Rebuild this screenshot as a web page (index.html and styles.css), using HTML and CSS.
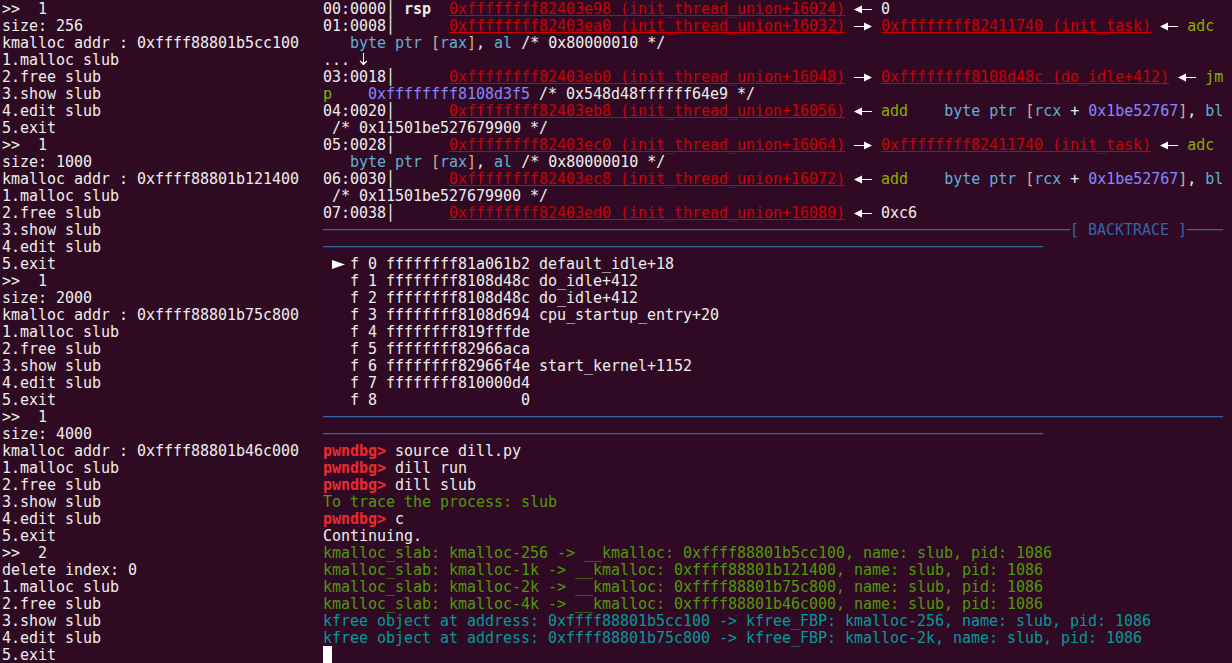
FILE: index.html
```html
<!DOCTYPE html>
<html lang="en">
<head>
<meta charset="utf-8">
<title>pwndbg</title>
<link rel="stylesheet" href="styles.css">
</head>
<body>
<svg class="defs" aria-hidden="true">
<symbol id="arrow-left" viewBox="0 0 18 17"><path d="M0 9.5 8 5.5V9H18V10H8V13.5Z"/></symbol>
<symbol id="arrow-right" viewBox="0 0 18 17"><path d="M18 9.5 10 5.5V9H0V10H10V13.5Z"/></symbol>
<symbol id="arrow-down" viewBox="0 0 9 17"><path d="M4 2H5V11.5L7.8 9.5 8.4 10.2 4.5 14.5 0.6 10.2 1.2 9.5 4 11.5Z"/></symbol>
<symbol id="frame-mark" viewBox="0 0 18 17"><path d="M0 5 13 9.5 0 14Z"/></symbol>
</svg>
<main class="terminal">
<section class="pane pane-left">
<div class="row">&gt;&gt;  1</div>
<div class="row">size: 256</div>
<div class="row">kmalloc addr : 0xffff88801b5cc100</div>
<div class="row">1.malloc slub</div>
<div class="row">2.free slub</div>
<div class="row">3.show slub</div>
<div class="row">4.edit slub</div>
<div class="row">5.exit</div>
<div class="row">&gt;&gt;  1</div>
<div class="row">size: 1000</div>
<div class="row">kmalloc addr : 0xffff88801b121400</div>
<div class="row">1.malloc slub</div>
<div class="row">2.free slub</div>
<div class="row">3.show slub</div>
<div class="row">4.edit slub</div>
<div class="row">5.exit</div>
<div class="row">&gt;&gt;  1</div>
<div class="row">size: 2000</div>
<div class="row">kmalloc addr : 0xffff88801b75c800</div>
<div class="row">1.malloc slub</div>
<div class="row">2.free slub</div>
<div class="row">3.show slub</div>
<div class="row">4.edit slub</div>
<div class="row">5.exit</div>
<div class="row">&gt;&gt;  1</div>
<div class="row">size: 4000</div>
<div class="row">kmalloc addr : 0xffff88801b46c000</div>
<div class="row">1.malloc slub</div>
<div class="row">2.free slub</div>
<div class="row">3.show slub</div>
<div class="row">4.edit slub</div>
<div class="row">5.exit</div>
<div class="row">&gt;&gt;  2</div>
<div class="row">delete index: 0</div>
<div class="row">1.malloc slub</div>
<div class="row">2.free slub</div>
<div class="row">3.show slub</div>
<div class="row">4.edit slub</div>
<div class="row">5.exit</div>
</section>
<section class="pane pane-right">
<div class="row">00:0000│ <b>rsp</b>  <span class="addr">0xffffffff82403e98 (init_thread_union+16024)</span> <svg class="glyph"><use href="#arrow-left"/></svg> 0</div>
<div class="row">01:0008│      <span class="addr">0xffffffff82403ea0 (init_thread_union+16032)</span> <svg class="glyph"><use href="#arrow-right"/></svg> <span class="addr">0xffffffff82411740 (init_task)</span> <svg class="glyph"><use href="#arrow-left"/></svg> <span class="op">adc</span></div>
<div class="row">   <span class="kw">byte ptr</span> <span class="br">[</span><span class="kw">rax</span><span class="br">]</span>, <span class="kw">al</span> /* 0x80000010 */</div>
<div class="row">... <svg class="glyph-narrow"><use href="#arrow-down"/></svg></div>
<div class="row">03:0018│      <span class="addr">0xffffffff82403eb0 (init_thread_union+16048)</span> <svg class="glyph"><use href="#arrow-right"/></svg> <span class="addr">0xffffffff8108d48c (do_idle+412)</span> <svg class="glyph"><use href="#arrow-left"/></svg> <span class="op">jm</span></div>
<div class="row"><span class="op">p</span>    <span class="num">0xffffffff8108d3f5</span> /* 0x548d48ffffff64e9 */</div>
<div class="row">04:0020│      <span class="addr">0xffffffff82403eb8 (init_thread_union+16056)</span> <svg class="glyph"><use href="#arrow-left"/></svg> <span class="op">add</span>    <span class="kw">byte ptr</span> <span class="br">[</span><span class="kw">rcx</span> + <span class="num">0x1be52767</span><span class="br">]</span>, <span class="kw">bl</span></div>
<div class="row"> /* 0x11501be527679900 */</div>
<div class="row">05:0028│      <span class="addr">0xffffffff82403ec0 (init_thread_union+16064)</span> <svg class="glyph"><use href="#arrow-right"/></svg> <span class="addr">0xffffffff82411740 (init_task)</span> <svg class="glyph"><use href="#arrow-left"/></svg> <span class="op">adc</span></div>
<div class="row">   <span class="kw">byte ptr</span> <span class="br">[</span><span class="kw">rax</span><span class="br">]</span>, <span class="kw">al</span> /* 0x80000010 */</div>
<div class="row">06:0030│      <span class="addr">0xffffffff82403ec8 (init_thread_union+16072)</span> <svg class="glyph"><use href="#arrow-left"/></svg> <span class="op">add</span>    <span class="kw">byte ptr</span> <span class="br">[</span><span class="kw">rcx</span> + <span class="num">0x1be52767</span><span class="br">]</span>, <span class="kw">bl</span></div>
<div class="row"> /* 0x11501be527679900 */</div>
<div class="row">07:0038│      <span class="addr">0xffffffff82403ed0 (init_thread_union+16080)</span> <svg class="glyph"><use href="#arrow-left"/></svg> 0xc6</div>
<div class="row rule">───────────────────────────────────────────────────────────────────────────────────<span class="title">[ BACKTRACE ]</span>────</div>
<div class="row rule">────────────────────────────────────────────────────────────────────────────────</div>
<div class="row"> <svg class="glyph"><use href="#frame-mark"/></svg>f 0 ffffffff81a061b2 default_idle+18</div>
<div class="row">   f 1 ffffffff8108d48c do_idle+412</div>
<div class="row">   f 2 ffffffff8108d48c do_idle+412</div>
<div class="row">   f 3 ffffffff8108d694 cpu_startup_entry+20</div>
<div class="row">   f 4 ffffffff819fffde</div>
<div class="row">   f 5 ffffffff82966aca</div>
<div class="row">   f 6 ffffffff82966f4e start_kernel+1152</div>
<div class="row">   f 7 ffffffff810000d4</div>
<div class="row">   f 8                0</div>
<div class="row rule">────────────────────────────────────────────────────────────────────────────────────────────────────</div>
<div class="row rule">────────────────────────────────────────────────────────────────────────────────</div>
<div class="row"><b class="prompt">pwndbg&gt;</b> source dill.py</div>
<div class="row"><b class="prompt">pwndbg&gt;</b> dill run</div>
<div class="row"><b class="prompt">pwndbg&gt;</b> dill slub</div>
<div class="row green">To trace the process: slub</div>
<div class="row"><b class="prompt">pwndbg&gt;</b> c</div>
<div class="row">Continuing.</div>
<div class="row green">kmalloc_slab: kmalloc-256 -&gt; __kmalloc: 0xffff88801b5cc100, name: slub, pid: 1086</div>
<div class="row green">kmalloc_slab: kmalloc-1k -&gt; __kmalloc: 0xffff88801b121400, name: slub, pid: 1086</div>
<div class="row green">kmalloc_slab: kmalloc-2k -&gt; __kmalloc: 0xffff88801b75c800, name: slub, pid: 1086</div>
<div class="row green">kmalloc_slab: kmalloc-4k -&gt; __kmalloc: 0xffff88801b46c000, name: slub, pid: 1086</div>
<div class="row teal">kfree object at address: 0xffff88801b5cc100 -&gt; kfree_FBP: kmalloc-256, name: slub, pid: 1086</div>
<div class="row teal">kfree object at address: 0xffff88801b75c800 -&gt; kfree_FBP: kmalloc-2k, name: slub, pid: 1086</div>
<div class="row"><span class="cursor"></span></div>
</section>
</main>
</body>
</html>
```
FILE: styles.css
```css
html, body {
  margin: 0;
  height: 100%;
  background: #300a24;
  overflow: hidden;
}
.defs {
  display: none;
}
.terminal {
  display: flex;
  width: 1232px;
  height: 663px;
  font-family: "DejaVu Sans Mono", monospace;
  font-size: 15px;
  line-height: 19px;
  letter-spacing: -0.03px;
  color: #eeeeec;
}
.pane { overflow: hidden; }
.pane-left {
  width: 321px;
  padding-left: 2px;
  background: #2e0a23;
}
.pane-right {
  flex: 1;
}
.row {
  height: 17px;
  white-space: pre;
}
b { font-weight: bold; }
.addr {
  color: #cc0000;
  text-decoration: underline;
  text-decoration-skip-ink: none;
}
.glyph,
.glyph-narrow {
  display: inline-block;
  height: 17px;
  vertical-align: top;
  fill: #ffffff;
}
.glyph { width: 18px; }
.glyph-narrow { width: 9px; }
.op { color: #87af00; }
.kw { color: #5fafd7; }
.br { color: #d7af87; }
.num { color: #8787ff; }
.rule { color: #3465a4; }
.title { color: #3465a4; }
.prompt { color: #ef2929; }
.green { color: #4e9a06; }
.teal { color: #06989a; }
.cursor {
  display: block;
  width: 9px;
  height: 17px;
  background: #ffffff;
}
```
